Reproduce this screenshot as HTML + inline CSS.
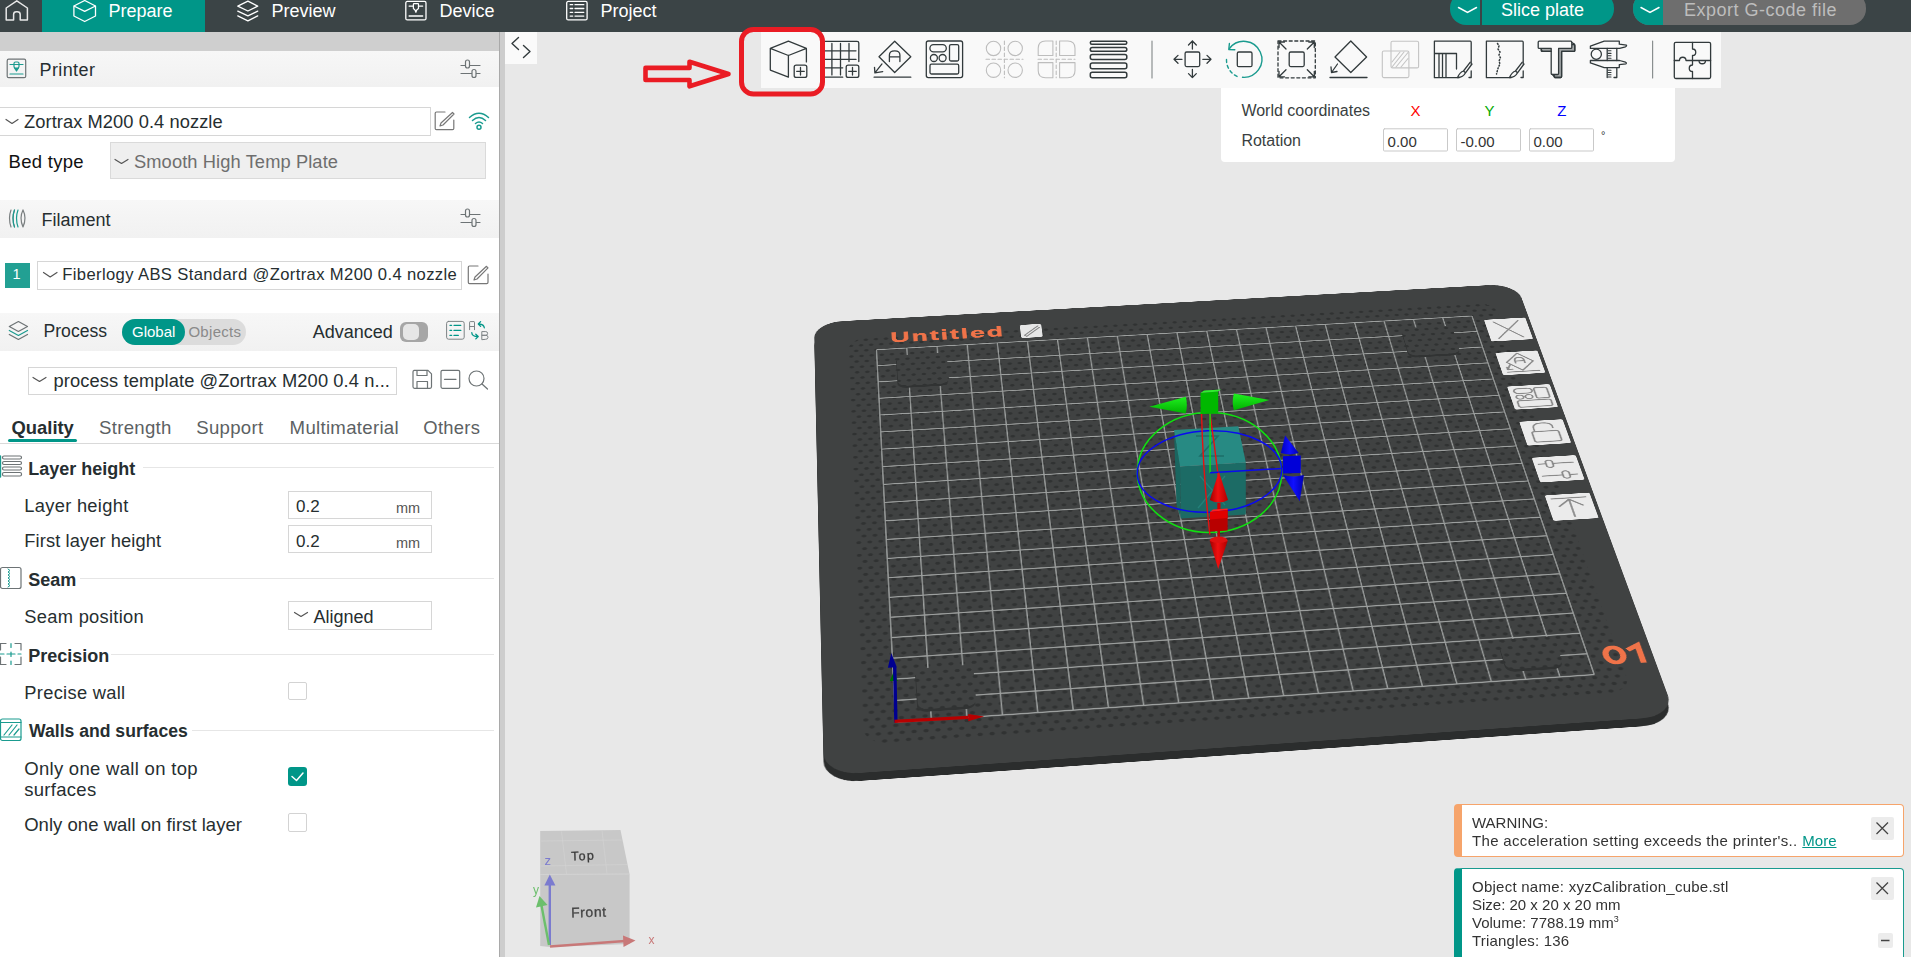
<!DOCTYPE html>
<html><head><meta charset="utf-8">
<style>
*{margin:0;padding:0;box-sizing:border-box}
html,body{width:1911px;height:957px;overflow:hidden;background:#e8e8e8;font-family:"Liberation Sans",sans-serif;color:#262e30}
.a{position:absolute}
.t{position:absolute;white-space:nowrap;line-height:1}
#top{left:0;top:0;width:1911px;height:32px;background:#3b4446}
#left{left:0;top:32px;width:499px;height:925px;background:#fff}
#sep{left:499px;top:32px;width:6px;height:925px;background:#cdcdcd;border-left:1px solid #a9a9a9}
#view{left:505px;top:32px;width:1406px;height:925px;background:#e8e8e8;overflow:hidden}
.hdr{position:absolute;left:0;width:499px;background:linear-gradient(#f7f7f7,#f1f1f1)}
svg{position:absolute;overflow:visible}
</style></head><body>
<!-- TOP BAR -->
<div id="top" class="a">
  <div class="a" style="left:42px;top:0;width:163px;height:32px;background:#009688"></div>
  <svg width="700" height="32" style="left:0;top:0" fill="none" stroke="#fff" stroke-width="1.5" stroke-linejoin="round" stroke-linecap="round">
 <path d="M6.2 20 V8 L16.8 0.8 L27.4 8 V20 H20.2 V14.5 Q20.2 11.8 17.2 11.8 H16.4 Q13.6 11.8 13.6 14.5 V20 Z" stroke="#e8e8e8"/>
 <path d="M84.7 0.5 L95.5 6 V16 L84.7 21.5 L73.9 16 V6 Z M73.9 6 L84.7 11.3 L95.5 6" stroke-width="1.3"/>
 <path d="M247.9 1.2 L257.7 6.1 L247.9 11 L237.8 6.1 Z M237.8 11.1 L247.9 15.9 L257.7 11.1 M237.8 15.9 L247.9 20.9 L257.7 15.9" stroke-width="1.3"/>
 <rect x="405.8" y="1.4" width="20.2" height="18.5" rx="1.5" stroke-width="1.3"/>
 <path d="M409.1 6.1 H413.4 M418.4 6.1 H422.7 M409.1 16 H422.7" stroke-width="1.3"/>
 <path d="M414 3.6 H418 Q418.5 3.6 418.5 4.3 V8.5 L416.7 10 L415.9 12.3 L415 10 L413.4 8.5 V4.3 Q413.4 3.6 414 3.6 Z" stroke-width="1.2"/>
 <rect x="566.7" y="1.4" width="20.4" height="18.5" rx="1.5" stroke-width="1.3"/>
 <path d="M570.2 4.7 H572.7 M575 4.7 H583.8 M570.2 8.5 H572.7 M575 8.5 H583.8 M570.2 12.3 H572.7 M575 12.3 H583.8 M570.2 16.1 H572.7 M575 16.1 H583.8" stroke-width="1.3"/>
</svg>
  <div class="t" style="left:108.5px;top:2px;font-size:18px;color:#fff">Prepare</div>
  <div class="t" style="left:271.5px;top:2px;font-size:18px;color:#fff">Preview</div>
  <div class="t" style="left:439.5px;top:2px;font-size:18px;color:#fff">Device</div>
  <div class="t" style="left:600.5px;top:2px;font-size:18px;color:#fff">Project</div>
  <div class="a" style="left:1450px;top:-8px;width:164px;height:33px;border-radius:0 0 16px 16px;background:#009688;border-radius:16px"></div>
  <div class="a" style="left:1480px;top:0;width:2px;height:25px;background:#3b4446"></div>
  <div class="t" style="left:1501px;top:1px;font-size:18px;color:#fff">Slice plate</div>
  <div class="a" style="left:1633px;top:-8px;width:233px;height:33px;border-radius:16px;background:#6e6e6e;overflow:hidden"><div class="a" style="left:0;top:0;width:30px;height:33px;background:#009688"></div></div>
  <div class="t" style="left:1684px;top:1px;font-size:18px;color:#bdbdbd;letter-spacing:0.5px">Export G-code file</div>
  <svg width="1911" height="32" style="left:0;top:0" fill="none" stroke="#fff" stroke-width="1.5" stroke-linecap="round"><path d="M1458.5 7.5 L1467.5 12.3 L1476.5 7.5 M1641 7.5 L1650 12.3 L1659 7.5"/></svg>
</div>
<div id="left" class="a"></div>
<!-- LEFT PANEL CONTENT -->
<div class="a" style="left:0;top:32px;width:499px;height:19px;background:#cfcfcf"></div>
<div class="hdr" style="top:51px;height:35.5px"></div>
<div class="hdr" style="top:200px;height:38px"></div>
<div class="hdr" style="top:313px;height:38px"></div>
<!-- combos -->
<div class="a" style="left:-2px;top:107px;width:433px;height:28.5px;border:1px solid #d6d6d6;background:#fff"></div>
<div class="a" style="left:109.5px;top:142.3px;width:376.5px;height:37.2px;border:1px solid #dadada;background:#efefef"></div>
<div class="a" style="left:37px;top:261px;width:424.5px;height:28.5px;border:1px solid #d6d6d6;background:#fff"></div>
<div class="a" style="left:5px;top:263px;width:25px;height:25px;background:#22a093"></div>
<div class="a" style="left:28px;top:366.5px;width:368.5px;height:28px;border:1px solid #d6d6d6;background:#fff"></div>
<!-- global/objects toggle -->
<div class="a" style="left:121.7px;top:319px;width:124.5px;height:25.6px;border-radius:13px;background:#dcdcdc"></div>
<div class="a" style="left:121.7px;top:319px;width:63.5px;height:25.6px;border-radius:13px;background:#009688"></div>
<div class="a" style="left:400.3px;top:322px;width:27.5px;height:20px;border-radius:6px;background:#a6a6a6"></div>
<div class="a" style="left:402.5px;top:324px;width:16px;height:16px;border-radius:5px;background:#e6e6e6"></div>
<!-- tabs underline & separator -->
<div class="a" style="left:8px;top:439.3px;width:69px;height:3px;border-radius:2px;background:#009688"></div>
<div class="a" style="left:0;top:443px;width:499px;height:1px;background:#d9d9d9"></div>
<!-- section lines -->
<div class="a" style="left:143px;top:467px;width:351px;height:1px;background:#e6e6e6"></div>
<div class="a" style="left:80px;top:578px;width:414px;height:1px;background:#e6e6e6"></div>
<div class="a" style="left:111px;top:654px;width:383px;height:1px;background:#e6e6e6"></div>
<div class="a" style="left:192px;top:730px;width:302px;height:1px;background:#e6e6e6"></div>
<!-- inputs -->
<div class="a" style="left:288.3px;top:490.6px;width:143.4px;height:28px;border:1px solid #d6d6d6;background:#fff"></div>
<div class="a" style="left:288.3px;top:525.4px;width:143.4px;height:28px;border:1px solid #d6d6d6;background:#fff"></div>
<div class="a" style="left:288.3px;top:601.2px;width:143.4px;height:28.4px;border:1px solid #d6d6d6;background:#fff"></div>
<div class="a" style="left:288.3px;top:681.5px;width:18.5px;height:18.5px;border:1px solid #d3d3d3;border-radius:2px;background:#fff"></div>
<div class="a" style="left:288px;top:767.2px;width:19px;height:19.3px;border-radius:3px;background:#009688"></div>
<div class="a" style="left:288.3px;top:813.3px;width:18.6px;height:18.8px;border:1px solid #d3d3d3;border-radius:2px;background:#fff"></div>
<!-- texts -->
<div class="t" style="left:39.5px;top:60.5px;font-size:18px;letter-spacing:0.4px">Printer</div>
<div class="t" style="left:24px;top:113.0px;font-size:18.3px;letter-spacing:0.07px">Zortrax M200 0.4 nozzle</div>
<div class="t" style="left:8.5px;top:152.5px;font-size:18.5px;letter-spacing:0.3px;color:#111">Bed type</div>
<div class="t" style="left:134px;top:152.5px;font-size:18.3px;color:#6e6e6e;letter-spacing:0.1px">Smooth High Temp Plate</div>
<div class="t" style="left:41.5px;top:210.5px;font-size:18px">Filament</div>
<div class="t" style="left:62.3px;top:267.0px;font-size:16.6px;letter-spacing:0.37px">Fiberlogy ABS Standard @Zortrax M200 0.4 nozzle</div>
<div class="t" style="left:12.5px;top:266.5px;font-size:14.5px;color:#fff">1</div>
<div class="t" style="left:43.5px;top:323.0px;font-size:17.6px">Process</div>
<div class="t" style="left:132px;top:324.0px;font-size:15px;color:#fff">Global</div>
<div class="t" style="left:188.4px;top:324.0px;font-size:15px;color:#8a8a8a;letter-spacing:0.3px">Objects</div>
<div class="t" style="left:312.7px;top:323.0px;font-size:18px">Advanced</div>
<div class="t" style="left:53.6px;top:372.0px;font-size:18.3px;letter-spacing:0.1px">process template @Zortrax M200 0.4 n...</div>
<div class="t" style="left:11.5px;top:419.0px;font-size:18.4px;font-weight:bold">Quality</div>
<div class="t" style="left:99px;top:419.0px;font-size:18.6px;color:#5c6163;letter-spacing:0.3px">Strength</div>
<div class="t" style="left:196.2px;top:419.0px;font-size:18.6px;color:#5c6163;letter-spacing:0.3px">Support</div>
<div class="t" style="left:289.6px;top:419.0px;font-size:18.6px;color:#5c6163;letter-spacing:0.3px">Multimaterial</div>
<div class="t" style="left:423.3px;top:419.0px;font-size:18.4px;color:#5c6163;letter-spacing:0.3px">Others</div>
<div class="t" style="left:28.3px;top:460.0px;font-size:18px;font-weight:bold">Layer height</div>
<div class="t" style="left:24.3px;top:496.5px;font-size:18.3px;letter-spacing:0.3px">Layer height</div>
<div class="t" style="left:296px;top:497.5px;font-size:17px">0.2</div>
<div class="t" style="left:396px;top:500.5px;font-size:14.5px;color:#555">mm</div>
<div class="t" style="left:24.3px;top:531.5px;font-size:18.3px;letter-spacing:0.1px">First layer height</div>
<div class="t" style="left:296px;top:532.5px;font-size:17px">0.2</div>
<div class="t" style="left:396px;top:535.5px;font-size:14.5px;color:#555">mm</div>
<div class="t" style="left:28.3px;top:571.0px;font-size:18px;font-weight:bold">Seam</div>
<div class="t" style="left:24.3px;top:607.5px;font-size:18.3px;letter-spacing:0.3px">Seam position</div>
<div class="t" style="left:313.4px;top:607.5px;font-size:18px">Aligned</div>
<div class="t" style="left:28.3px;top:647.0px;font-size:18px;font-weight:bold">Precision</div>
<div class="t" style="left:24.3px;top:683.5px;font-size:18.3px;letter-spacing:0.3px">Precise wall</div>
<div class="t" style="left:29px;top:723.0px;font-size:17.6px;font-weight:bold">Walls and surfaces</div>
<div class="t" style="left:24.2px;top:759.5px;font-size:18.5px;letter-spacing:0.3px">Only one wall on top</div>
<div class="t" style="left:24.2px;top:780.5px;font-size:18.5px;letter-spacing:0.3px">surfaces</div>
<div class="t" style="left:24.2px;top:815.5px;font-size:18.5px;letter-spacing:0.03px">Only one wall on first layer</div>
<!-- left icons svg -->
<svg width="500" height="900" style="left:0;top:0" fill="none" stroke="#5f6669" stroke-width="1.2" stroke-linecap="round" stroke-linejoin="round">
 <!-- printer icon -->
 <rect x="7.2" y="59.2" width="18.5" height="18.5" rx="1.5" stroke="#6d7375"/>
 <path d="M10 64.5 H23 M10 74 H23" stroke="#1a9b8f"/>
 <rect x="14" y="62" width="5" height="6" rx="1.5" stroke="#1a9b8f"/>
 <path d="M14.5 68 L16.5 71 L18.5 68" stroke="#1a9b8f" fill="#1a9b8f"/>
 <!-- sliders -->
 <path d="M461 65.5 H480 M461 73.5 H480" stroke="#6d7375"/>
 <rect x="465.5" y="60" width="4" height="8" rx="2" fill="#f5f5f5" stroke="#6d7375"/>
 <rect x="472" y="69.5" width="4" height="8" rx="2" fill="#f3f3f3" stroke="#6d7375"/>
 <path d="M461 214.5 H480 M461 222.5 H480" stroke="#6d7375"/>
 <rect x="465.5" y="209" width="4" height="8" rx="2" fill="#f5f5f5" stroke="#6d7375"/>
 <rect x="472" y="218.5" width="4" height="8" rx="2" fill="#f3f3f3" stroke="#6d7375"/>
 <!-- chevrons -->
 <path d="M6 119.5 L12 123.5 L18 119.5 M115 159.5 L121.5 163.5 L128 159.5 M43.5 272.5 L50.2 277 L57 272.5 M33 377.5 L39.5 381.5 L46 377.5 M294.5 612.5 L301 616.5 L307.5 612.5" stroke="#555"/>
 <!-- edit icons -->
 <path d="M445 112 H436.5 Q435.2 112 435.2 113.3 V128.5 Q435.2 129.7 436.5 129.7 H452.5 Q453.8 129.7 453.8 128.5 V120" stroke="#777"/>
 <path d="M452.5 112.5 L454 114 L443 125 L440 126 L441 123 Z" stroke="#777"/>
 <path d="M478 266 H469.5 Q468.3 266 468.3 267.3 V282.3 Q468.3 283.6 469.5 283.6 H486.7 Q488 283.6 488 282.3 V274" stroke="#777"/>
 <path d="M486.5 266.3 L488 267.8 L477 279 L474 280 L475 277 Z" stroke="#777"/>
 <!-- wifi -->
 <g stroke="#1a9b8f" stroke-width="1.5">
  <path d="M469.5 117.5 Q479 109 488.5 117.5 M472.5 120.5 Q479 114.5 485.5 120.5 M475.5 123.5 Q479 120.5 482.5 123.5"/>
  <circle cx="479" cy="127.3" r="2"/>
 </g>
 <!-- filament icon -->
 <path d="M11 210 Q8 218 11 227 M14.5 210 Q11.5 218 14.5 227 M23 210 Q27 218 23 227 M23 210 Q19 218 23 227" stroke="#7a7f80"/>
 <path d="M14.5 210 Q11.5 218 14.5 227 M18 210 Q15 218 18 227" stroke="#1a9b8f"/>
 <!-- layers icon -->
 <path d="M18.4 321.5 L27.5 326.5 L18.4 331.5 L9.3 326.5 Z M9.3 334.5 L18.4 339.5 L27.5 334.5" stroke="#6d7375"/>
 <path d="M9.3 330.5 L18.4 335.5 L27.5 330.5" stroke="#1a9b8f"/>
 <!-- list & AB icons -->
 <rect x="446.6" y="321.4" width="17.6" height="17.8" rx="2" stroke="#7d8385" stroke-width="1"/>
 <path d="M450 325.3 H451.6 M454 325.3 H460.8 M450 330.4 H451.6 M454 330.4 H460.8 M450 335.4 H451.6 M454 335.4 H458.3" stroke="#009688" stroke-width="1.3"/>
 <path d="M469.6 329.7 V322.2 Q469.6 321.6 470.2 321.6 H474 Q474.5 321.6 474.5 322.2 V329.7 M469.6 326.5 H474.5" stroke="#7d8385" stroke-width="1"/>
 <path d="M479 324 Q484 324.5 484.3 327.8 M480.6 321.6 L478.3 324 L480.6 326.4" stroke="#009688" stroke-width="1.3"/>
 <path d="M471.8 332.7 Q472 336.5 478 336.5 M475.8 334.3 L478.2 336.5 L475.8 338.9" stroke="#009688" stroke-width="1.3"/>
 <path d="M481.8 339.3 V331.6 H485.8 Q487.6 331.6 487.6 333.4 Q487.6 335.3 485.8 335.3 H481.8 H486 Q488 335.3 488 337.3 Q488 339.3 486 339.3 Z" stroke="#7d8385" stroke-width="1"/>
 <!-- save / minus / search -->
 <path d="M414 370.3 H428 L431.5 373.8 V386.8 Q431.5 388.3 430 388.3 H414.5 Q413 388.3 413 386.8 V371.8 Q413 370.3 414.5 370.3 Z M417 370.5 V375.5 H427 V370.5 M417 388 V381.5 H427.5 V388" stroke="#6d7375"/>
 <rect x="441" y="370.3" width="18.7" height="18" rx="1.5" stroke="#6d7375"/>
 <path d="M444.5 379.3 H456" stroke="#6d7375"/>
 <circle cx="476.5" cy="378.5" r="7.5" stroke="#6d7375"/>
 <path d="M482 384 L487.5 389" stroke="#6d7375"/>
 <!-- section icons -->
 <g stroke="#6d7375">
 <rect x="2.5" y="456" width="19" height="3" rx="1.5"/><rect x="2.5" y="461.5" width="19" height="3" rx="1.5"/><rect x="2.5" y="467" width="19" height="3" rx="1.5"/><rect x="2.5" y="472.5" width="19" height="3.5" rx="1.5"/>
 </g>
 <path d="M0.5 456 V477" stroke="#1a9b8f" stroke-width="1.4"/>
 <rect x="0.5" y="567.5" width="20.5" height="21" rx="2" stroke="#6d7375"/>
 <path d="M8 569 L10 570.5 L8 572 L10 573.5 L8 575 L10 576.5 L8 578 L10 579.5 L8 581 L10 582.5 L8 584 L10 585.5 L8 587" stroke="#1a9b8f" stroke-width="1"/>
 <path d="M0.5 643.5 V650 M0.5 657 V664.5 H6 M15 664.5 H21 V657 M21 650 V643.5 H15 M6 643.5 H0.5" stroke="#6d7375"/>
 <path d="M11 643.5 V647.5 M11 652 V656.5 M11 661 V664.5 M0.5 654 H4 M7 654 H15 M18 654 H21" stroke="#1a9b8f"/>
 <rect x="0.5" y="719" width="20.5" height="21.5" rx="2" stroke="#1a9b8f"/>
 <path d="M0.5 722.5 H21 M0.5 737 H21 M4 735 L12 725 M9 735 L17 725 M14 735 L19 729" stroke="#1a9b8f"/>
 <!-- check -->
 <path d="M292 776.5 L296.5 780.5 L303 773" stroke="#fff" stroke-width="1.5"/>
</svg>
<div id="sep" class="a"></div>
<div id="view" class="a"></div>
<!-- BED -->
<div class="a" style="left:-6px;top:-6px;width:1012px;height:1012px;transform-origin:6px 6px;transform:translate(0px,8px) matrix3d(0.73611945,-0.032774605,0,2.2303932e-05,-0.13781755,0.31360081,0,-0.00017939024,0,0,1,0,814,322.7,0,1)"><div class="a" style="left:6px;top:6px;width:1000px;height:1000px;background:#2b2d2d;border-radius:40px"></div></div>
<div class="a" style="left:-6px;top:-6px;width:1012px;height:1012px;transform-origin:6px 6px;transform:matrix3d(0.73611945,-0.032774605,0,2.2303932e-05,-0.13781755,0.31360081,0,-0.00017939024,0,0,1,0,814,322.7,0,1)">
<div class="a" id="bed" style="left:6px;top:6px;width:1000px;height:1000px;background:#404242;border-radius:40px;overflow:hidden">
 <div class="a" style="left:47px;top:46px;width:912px;height:903px;border-radius:30px;background-image:radial-gradient(circle at 3.5px 3.5px,#303232 2.7px,transparent 3.4px),radial-gradient(circle at 10.47px 17.43px,#303232 2.7px,transparent 3.4px);background-size:13.933px 27.867px;background-position:6.63px 3.63px"></div>
 <svg width="1000" height="1000" style="left:0;top:0">
  <g stroke="#9c9f9e" stroke-width="1.7">
<line x1="85.0" y1="81" x2="85.0" y2="911"/>
<line x1="126.8" y1="81" x2="126.8" y2="911"/>
<line x1="168.6" y1="81" x2="168.6" y2="911"/>
<line x1="210.4" y1="81" x2="210.4" y2="911"/>
<line x1="252.2" y1="81" x2="252.2" y2="911"/>
<line x1="294.0" y1="81" x2="294.0" y2="911"/>
<line x1="335.8" y1="81" x2="335.8" y2="911"/>
<line x1="377.6" y1="81" x2="377.6" y2="911"/>
<line x1="419.4" y1="81" x2="419.4" y2="911"/>
<line x1="461.2" y1="81" x2="461.2" y2="911"/>
<line x1="503.0" y1="81" x2="503.0" y2="911"/>
<line x1="544.8" y1="81" x2="544.8" y2="911"/>
<line x1="586.6" y1="81" x2="586.6" y2="911"/>
<line x1="628.4" y1="81" x2="628.4" y2="911"/>
<line x1="670.2" y1="81" x2="670.2" y2="911"/>
<line x1="712.0" y1="81" x2="712.0" y2="911"/>
<line x1="753.8" y1="81" x2="753.8" y2="911"/>
<line x1="795.6" y1="81" x2="795.6" y2="911"/>
<line x1="837.4" y1="81" x2="837.4" y2="911"/>
<line x1="879.2" y1="81" x2="879.2" y2="911"/>
<line x1="921.0" y1="81" x2="921.0" y2="911"/>
  </g>
  <g stroke="#9c9f9e" stroke-width="2.6">
<line x1="85" y1="81.0" x2="921" y2="81.0"/>
<line x1="85" y1="122.5" x2="921" y2="122.5"/>
<line x1="85" y1="164.0" x2="921" y2="164.0"/>
<line x1="85" y1="205.5" x2="921" y2="205.5"/>
<line x1="85" y1="247.0" x2="921" y2="247.0"/>
<line x1="85" y1="288.5" x2="921" y2="288.5"/>
<line x1="85" y1="330.0" x2="921" y2="330.0"/>
<line x1="85" y1="371.5" x2="921" y2="371.5"/>
<line x1="85" y1="413.0" x2="921" y2="413.0"/>
<line x1="85" y1="454.5" x2="921" y2="454.5"/>
<line x1="85" y1="496.0" x2="921" y2="496.0"/>
<line x1="85" y1="537.5" x2="921" y2="537.5"/>
<line x1="85" y1="579.0" x2="921" y2="579.0"/>
<line x1="85" y1="620.5" x2="921" y2="620.5"/>
<line x1="85" y1="662.0" x2="921" y2="662.0"/>
<line x1="85" y1="703.5" x2="921" y2="703.5"/>
<line x1="85" y1="745.0" x2="921" y2="745.0"/>
<line x1="85" y1="786.5" x2="921" y2="786.5"/>
<line x1="85" y1="828.0" x2="921" y2="828.0"/>
<line x1="85" y1="869.5" x2="921" y2="869.5"/>
<line x1="85" y1="911.0" x2="921" y2="911.0"/>
  </g>
 </svg>
 <div class="a" style="left:112px;top:99px;width:69px;height:79px;border-radius:12px;background-color:#404242;background-image:radial-gradient(circle at 3.5px 3.5px,#303232 2.7px,transparent 3.4px),radial-gradient(circle at 10.47px 17.43px,#303232 2.7px,transparent 3.4px);background-size:13.933px 27.867px;background-position:11.30px 6.37px;box-shadow:-1px 5px 0 #313333"></div>
 <div class="a" style="left:816px;top:103px;width:72px;height:73px;border-radius:12px;background-color:#404242;background-image:radial-gradient(circle at 3.5px 3.5px,#303232 2.7px,transparent 3.4px),radial-gradient(circle at 10.47px 17.43px,#303232 2.7px,transparent 3.4px);background-size:13.933px 27.867px;background-position:3.97px 2.37px;box-shadow:-1px 5px 0 #313333"></div>
 <div class="a" style="left:112px;top:810px;width:69px;height:80px;border-radius:12px;background-color:#404242;background-image:radial-gradient(circle at 3.5px 3.5px,#303232 2.7px,transparent 3.4px),radial-gradient(circle at 10.47px 17.43px,#303232 2.7px,transparent 3.4px);background-size:13.933px 27.867px;background-position:11.30px 19.90px;box-shadow:-1px 5px 0 #313333"></div>
 <div class="a" style="left:818px;top:830px;width:70px;height:60px;border-radius:12px;background-color:#404242;background-image:radial-gradient(circle at 3.5px 3.5px,#303232 2.7px,transparent 3.4px),radial-gradient(circle at 10.47px 17.43px,#303232 2.7px,transparent 3.4px);background-size:13.933px 27.867px;background-position:1.97px 27.77px;box-shadow:-1px 5px 0 #313333"></div>
 <div class="a" style="left:936px;top:93px;width:59px;height:58px;background:#ebebeb;border-radius:3px"></div>
 <div class="a" style="left:936px;top:180.5px;width:59px;height:58px;background:#ebebeb;border-radius:3px"></div>
 <div class="a" style="left:936px;top:268px;width:59px;height:58px;background:#ebebeb;border-radius:3px"></div>
 <div class="a" style="left:936px;top:355.5px;width:59px;height:58px;background:#ebebeb;border-radius:3px"></div>
 <div class="a" style="left:936px;top:443px;width:59px;height:58px;background:#ebebeb;border-radius:3px"></div>
 <div class="a" style="left:936px;top:530.5px;width:59px;height:58px;background:#ebebeb;border-radius:3px"></div>
 <svg width="1000" height="1000" style="left:0;top:0" fill="none" stroke="#8a8a8a" stroke-width="3" stroke-linecap="round" stroke-linejoin="round">
  <path d="M948 100 L983 144 M983 100 L948 144" stroke-width="2.3"/>
  <path d="M965.5 185 L984 207 L965.5 229 L947 207 Z M944 232 H988 M951 212 L945 226 M945 219 L945 226 L952 225" stroke-width="2.5"/>
  <path d="M959 210 V204 Q959 196 965.5 196 Q972 196 972 204 V210 M959 205 H972" stroke-width="2.5"/>
  <rect x="943" y="275" width="25" height="12" rx="6" stroke-width="2.5"/><rect x="971" y="275" width="18" height="26" rx="3" stroke-width="2.5"/>
  <circle cx="948.5" cy="296" r="5" stroke-width="2.5"/><circle cx="961" cy="296" r="5" stroke-width="2.5"/>
  <rect x="943" y="305" width="46" height="16" rx="3" stroke-width="2.5"/>
  <path d="M952 382 V374 Q952 362 965 362 Q978 362 978 372 V375" stroke-width="2.3"/>
  <rect x="948" y="382" width="36" height="25" rx="3" stroke-width="2.5"/>
  <path d="M942 459 H988 M942 487 H988" stroke-width="2.5"/>
  <rect x="952" y="451" width="9" height="17" rx="4.5" fill="#ebebeb" stroke-width="2.5"/>
  <rect x="969" y="478" width="9" height="17" rx="4.5" fill="#ebebeb" stroke-width="2.5"/>
  <path d="M943 540 H988 M965.5 545 V582 M950 558 L965.5 543 L981 558" stroke-width="2.5"/>
  <rect x="286" y="37" width="30" height="35" rx="4" fill="#e6e6e6" stroke="none"/>
  <path d="M291 65 L311 42 M294 68 L313 46 M291 65 L294 68" stroke="#8a8a8a" stroke-width="2"/>
 </svg>
 <div class="t" style="left:105px;top:32.7px;font-size:37px;font-weight:bold;color:#f07349;letter-spacing:2.7px;-webkit-text-stroke:0.8px #f07349">Untitled</div>
 <svg width="1000" height="1000" style="left:0;top:0" fill="none" stroke="#f07349" stroke-width="7.5"><ellipse cx="953.5" cy="875.5" rx="10.5" ry="15"/><path d="M971.5 867.5 L985.5 859 V894.5" stroke-linecap="butt"/></svg>
</div></div>

<!-- GIZMO -->
<svg width="1911" height="957" style="left:0;top:0" fill="none">
 <defs>
  <linearGradient id="gr" x1="0" x2="1"><stop offset="0" stop-color="#a00000"/><stop offset="0.45" stop-color="#f01010"/><stop offset="1" stop-color="#b00000"/></linearGradient>
  <linearGradient id="gg" x1="0" y1="0" x2="0" y2="1"><stop offset="0" stop-color="#20f020"/><stop offset="1" stop-color="#00b000"/></linearGradient>
  <linearGradient id="gb" x1="0" x2="1"><stop offset="0" stop-color="#0000c0"/><stop offset="0.5" stop-color="#1010ff"/><stop offset="1" stop-color="#0000b0"/></linearGradient>
 </defs>
 <!-- origin axes -->
 <path d="M889.8 681 L893.8 671.5 L897.8 681 Z" fill="#007000"/>
 <path d="M894.7 667 L895.9 722.5" stroke="#000090" stroke-width="3.4"/>
 <path d="M887.9 667.8 L891.3 652.9 L896.8 667.3 Z" fill="#000090"/>
 <path d="M894.5 721.3 L968.5 717.4" stroke="#b80000" stroke-width="3.2"/>
 <path d="M968.2 713.9 L984.1 716.4 L968.3 721.3 Z" fill="#b80000"/>
 <!-- cube -->
 <path d="M1174 430 L1180 466.4 L1180.7 518.4 L1176.5 505 Z" fill="#1a6660"/>
 <path d="M1174 430 L1238.3 426.3 L1245.8 462.6 L1180 466.4 Z" fill="#278a83"/>
 <path d="M1180 466.4 L1245.8 462.6 L1245.8 514.6 L1180.7 518.4 Z" fill="#1c6b65"/>
 <path d="M1196 436 H1218 L1200 456 H1224" stroke="#1d6f69" stroke-width="1.6"/>
 <path d="M1200 476 L1225 505 M1225 476 L1198 508" stroke="#238079" stroke-width="1.3"/>
 <!-- rings -->
 <ellipse cx="1209.5" cy="472.5" rx="72.2" ry="60" stroke="#10e010" stroke-width="1.5"/>
 <ellipse cx="1209.5" cy="471.5" rx="72.3" ry="40.7" stroke="#0a0af0" stroke-width="1.5" transform="rotate(-2.2 1209.5 471.5)"/>
 <path d="M1201.5 413.4 Q1203.5 480 1209.9 534.6 M1209.9 413.4 Q1214.5 445 1218.2 476" stroke="#e81010" stroke-width="1.4"/>
 <!-- axis lines -->
 <path d="M1210.1 413 V472.7" stroke="#10e010" stroke-width="1.4"/>
 <path d="M1210.1 472.7 L1282 468.5" stroke="#0a0af0" stroke-width="1.5"/>
 <!-- green handles -->
 <path d="M1149.3 406.8 L1185.8 396.7 Q1188 405 1185.8 413.4 Z" fill="url(#gg)"/>
 <path d="M1269.4 399.9 L1233.9 393.6 Q1231.5 402 1233.9 410.3 Z" fill="url(#gg)"/>
 <path d="M1200.5 393 L1218.2 391.5 V413.4 L1200.5 414 Z" fill="#00b800"/>
 <path d="M1200.5 393 L1204 390.5 L1221 389.5 L1218.2 391.5 Z" fill="#30f030"/>
 <!-- red handles -->
 <path d="M1218.9 471.4 L1228 500 Q1218.9 505 1209.8 500 Z" fill="url(#gr)"/>
 <path d="M1217.3 503 H1220.5 V510 H1217.3 Z" fill="#d00000"/>
 <path d="M1209.9 512 L1227.6 510 V530.5 L1209.9 531.5 Z" fill="#b80000"/>
 <path d="M1209.9 512 L1213 509.5 L1227.6 508.5 V510 Z" fill="#ff2020"/>
 <path d="M1209.9 512 L1227.6 510 V518 L1209.9 519.5 Z" fill="#e00000"/>
 <path d="M1217.5 531 H1220 V537 H1217.5Z" fill="#c00000"/>
 <ellipse cx="1218.7" cy="540.8" rx="8.9" ry="4.2" fill="#e01010"/>
 <path d="M1209.8 541 Q1218.7 545 1227.6 541 L1218.2 569.1 Z" fill="url(#gr)"/>
 <!-- blue handles -->
 <path d="M1285.1 435.4 L1298.7 453.1 Q1290 456 1280.9 453.1 Z" fill="url(#gb)"/>
 <path d="M1283 456.3 L1300.8 455.5 V473 L1283 473.5 Z" fill="#0000d8"/>
 <path d="M1283 475.1 Q1293 478 1303.9 475.1 L1299.7 501.2 Z" fill="url(#gb)"/>
</svg>

<!-- TOOLBAR -->
<div class="a" style="left:505px;top:32px;width:32px;height:32px;background:#fafafa"></div>
<div class="a" style="left:761px;top:32px;width:960px;height:56px;background:#f9f9f9"></div>
<div class="a" style="left:1221px;top:88px;width:454px;height:74px;background:#fff;border-radius:0 0 4px 4px"></div>
<svg width="1911" height="170" style="left:0;top:0" fill="none" stroke="#323a3c" stroke-width="1.3" stroke-linejoin="round" stroke-linecap="round">
 <!-- collapse -->
 <path d="M518.5 37.5 L512 43.5 L518.5 49.5 M523.5 45.5 L530 51.5 L523.5 57.5" stroke-width="1.4"/>
 <!-- cube plus -->
 <path d="M788.4 41.1 L770.3 48.4 L788.4 55.5 L806.4 48.4 Z M770.3 48.4 V70.1 L788.4 77.2 V55.5 M806.4 48.4 V61.9"/>
 <rect x="794.2" y="65.2" width="12.6" height="12.2" rx="2"/>
 <path d="M800.5 67.5 V75.1 M796.7 71.3 H804.3"/>
 <!-- grid plus -->
 <path d="M825 41.3 H857 Q858.8 41.3 858.8 43 V61.5 M831.9 43.5 V74.9 M840.5 43.5 V74.9 M849 43.5 V61.5 M825 50.8 H856 M825 59.4 H856 M825 67.8 H842.7 M825 77.2 H842.7"/>
 <rect x="846.2" y="65.2" width="12.6" height="12.2" rx="2"/>
 <path d="M852.5 67.5 V75.1 M848.7 71.3 H856.3"/>
 <!-- diamond A -->
 <path d="M894.7 41.3 L910.8 56.8 L894.7 72.5 L879 56.8 Z M874.1 77.2 H910.8 M882 63.9 L874.9 72.9 M874.5 67.4 L874.9 72.9 L882.7 71.7"/>
 <path d="M889.4 61.5 V55 Q889.4 50.9 894.7 50.9 Q899.9 50.9 899.9 55 V61.5 M889.4 56.8 H899.9"/>
 <!-- layout -->
 <rect x="926.3" y="41" width="36.3" height="36.6" rx="2"/>
 <rect x="929.9" y="44.6" width="16.4" height="7.2" rx="3.6"/>
 <rect x="949.5" y="44.6" width="9.2" height="16.4" rx="1.5"/>
 <circle cx="933.9" cy="58" r="3.5"/><circle cx="942.6" cy="58" r="3.5"/>
 <rect x="930" y="64.2" width="28.7" height="9.8" rx="1.5"/>
 <!-- circles (disabled) -->
 <g stroke="#bdbdbd" stroke-width="1.1">
  <circle cx="993.5" cy="48.4" r="7.2"/><circle cx="1015.2" cy="48.4" r="7.2"/><circle cx="993.5" cy="70.2" r="7.2"/><circle cx="1015.2" cy="70.2" r="7.2"/>
  <path d="M1004.4 41 V77.7 M986 59.3 H1023" stroke-dasharray="3.5 2.5"/>
  <path d="M1052.9 55.5 V41 H1045.5 Q1038.2 41 1038.2 48.3 V55.5 Z M1059.6 55.5 V41 H1067.7 Q1075 41 1075 48.3 V55.5 Z M1052.9 62.6 V77.7 H1045.5 Q1038.2 77.7 1038.2 70.4 V62.6 Z M1059.6 62.6 V77.7 H1067.7 Q1075 77.7 1075 70.4 V62.6 Z"/>
  <path d="M1056.2 41 V77.7 M1038 59.3 H1075" stroke-dasharray="3.5 2.5"/>
 </g>
 <!-- layers -->
 <g stroke-width="1.5">
 <rect x="1090.3" y="41.2" width="36.5" height="3" rx="1.5"/>
 <rect x="1090.3" y="47.5" width="36.5" height="3.8" rx="1.9"/>
 <rect x="1090.3" y="54.5" width="36.5" height="5" rx="2"/>
 <rect x="1090.3" y="63" width="36.5" height="5.8" rx="2"/>
 <rect x="1090.3" y="72.2" width="36.5" height="5.5" rx="2"/>
 </g>
 <path d="M1152 41 V78" stroke="#8a8f90" stroke-width="1.2"/>
 <!-- move -->
 <rect x="1185.1" y="52" width="14.6" height="14.6" rx="1.5"/>
 <path d="M1192.4 41 V49 M1188.5 45 L1192.4 41 L1196.3 45 M1192.4 69.5 V77.6 M1188.5 73.6 L1192.4 77.6 L1196.3 73.6 M1174 59.3 H1182 M1178 55.4 L1174 59.3 L1178 63.2 M1202.8 59.3 H1211 M1207 55.4 L1211 59.3 L1207 63.2"/>
 <!-- rotate -->
 <rect x="1237.3" y="52" width="14.7" height="14.7" rx="1.5"/>
 <path d="M1229.5 48.5 A18 18 0 1 1 1242.5 77.3" stroke="#1a9b8f" stroke-width="1.4"/>
 <path d="M1226.5 59.5 A18 18 0 0 0 1238.5 77" stroke="#1a9b8f" stroke-width="1.4" stroke-dasharray="3 3"/>
 <path d="M1229.4 43.5 L1228.8 49.5 L1234.8 49.8" stroke="#1a9b8f" stroke-width="1.4"/>
 <!-- scale -->
 <rect x="1278" y="41" width="37.3" height="36.8" stroke-dasharray="3 2.6"/>
 <rect x="1289.2" y="52" width="15" height="14.6" rx="1.5"/>
 <path d="M1279 42 L1286 49 M1279 42 V47.5 M1279 42 H1284.5 M1314.3 42 L1307.3 49 M1314.3 42 V47.5 M1314.3 42 H1308.8 M1279 76.8 L1286 69.8 M1279 76.8 V71.3 M1279 76.8 H1284.5 M1314.3 76.8 L1307.3 69.8 M1314.3 76.8 V71.3 M1314.3 76.8 H1308.8"/>
 <!-- place on face -->
 <path d="M1350.8 41 L1366.6 57 L1350.8 72.5 L1335 57 Z M1330 77.5 H1367 M1337.5 64 L1331.5 72.5 M1331 67 L1331.5 72.5 L1337 71.5"/>
 <!-- boolean disabled -->
 <g stroke="#c4c4c4" stroke-width="1.1">
  <rect x="1391" y="41.3" width="27.6" height="26.6" rx="1.5"/>
  <rect x="1382.3" y="51" width="26.6" height="26.6" rx="1.5"/>
  <path d="M1392 62 L1400 52 M1392 67 L1404 52 M1396 67 L1408 52.5 M1401 67 L1408 58.5" />
 </g>
 <!-- support paint -->
 <path d="M1459 77.7 H1434.4 V41.2 H1470.3 Q1471.2 41.2 1471.2 42.5 V64 M1434.4 53.5 H1456.5 V69 M1439 53.5 V77.7 M1442.5 53.5 V77.7 M1446 53.5 V77.7 M1471.2 71 V77.5 H1469"/>
 <path d="M1470.3 62.2 L1463.5 71 M1465.5 72.8 L1472 64 M1463.5 71 Q1460 72 1457.5 77.5 Q1463 77.7 1465.5 72.8 Z"/>
 <!-- seam paint -->
 <path d="M1511 77.7 H1486.4 V41.2 H1522.3 Q1523.2 41.2 1523.2 42.5 V64 M1523.2 71 V77.5 H1521"/>
 <path d="M1497.5 43.5 L1499 46 L1498 49 L1500 52 L1499 55 L1500.5 58 L1499 61 L1500 64 L1498.5 67 L1497.5 70 L1496.5 74" stroke-dasharray="1 2" stroke-width="1.5"/>
 <path d="M1522.3 62.2 L1515.5 71 M1517.5 72.8 L1524 64 M1515.5 71 Q1512 72 1509.5 77.5 Q1515 77.7 1517.5 72.8 Z"/>
 <!-- text T -->
 <path d="M1542 44.5 H1573.5 Q1574.8 44.5 1574.8 45.5 V50.4 Q1574.8 51.4 1573.8 51.4 H1561.6 V76.5 Q1561.6 77.5 1560.6 77.5 H1555 Q1554.2 77.5 1554.2 76.5 V51.4 H1542 Q1541.2 51.4 1541.2 50.4 V45.5 Q1541.2 44.5 1542 44.5 Z" fill="#a3a7a8"/>
 <path d="M1539.2 41.2 H1570.8 Q1571.8 41.2 1571.8 42.2 V47.4 Q1571.8 48.4 1570.8 48.4 H1558.6 V73.5 Q1558.6 74.5 1557.6 74.5 H1552.2 Q1551.2 74.5 1551.2 73.5 V48.4 H1539.2 Q1538.2 48.4 1538.2 47.4 V42.2 Q1538.2 41.2 1539.2 41.2 Z" fill="#f9f9f9"/>
 <path d="M1571.8 42.5 L1574.5 44 Q1574.8 44.5 1574.8 45.5 V50.4 Q1574.8 51.4 1573.8 51.4 H1561.6 V76.5 Q1561.6 77.5 1560.6 77.5 H1555 L1552.5 74.5 M1541.2 48.8 Q1541.5 51.4 1543 51.4 H1551.2"/>
 <!-- measure -->
 <path d="M1590.4 46.2 L1604.2 41.2 H1619.3 V44.2 L1626.4 45.1 Q1627 46 1625.5 46.8 L1619.6 48.4 H1590.4 Z"/>
 <path d="M1590.4 60.5 H1619.6 L1625.5 62.2 Q1627 63 1626 63.8 L1619.3 64.6 V67.6 H1604.2 L1590.4 62.9 Z"/>
 <circle cx="1596.3" cy="54.2" r="5.1"/>
 <path d="M1607.2 48.4 V60.5 M1616.8 48.4 V60.5 M1607.2 67.6 V77.5 M1616.8 67.6 V77.5 H1614"/>
 <path d="M1608 50.8 H1611 M1608 53.4 H1611 M1608 55.8 H1611 M1608 58.2 H1611 M1608 70.3 H1611 M1608 72.5 H1611 M1608 74.7 H1611 M1608 77 H1611" stroke-width="1.1"/>
 <path d="M1652.6 41 V78" stroke="#8a8f90" stroke-width="1.2"/>
 <!-- puzzle -->
 <rect x="1674.3" y="42.3" width="36.3" height="36.2" rx="1.5"/>
 <path d="M1692.5 42.3 V49 A3 3 0 0 1 1692.5 55.5 V60.5 M1674.3 60.5 H1679.5 A3 3 0 0 1 1686 60.5 H1710.6 M1692.5 60.5 V65 A3 3 0 0 0 1692.5 71.5 V78.5 M1699 60.5 A3 3 0 0 0 1705.5 60.5"/>
 <!-- world coords panel -->
 <g stroke="#c9c9c9" stroke-width="1" fill="#fff">
  <rect x="1383.5" y="128.8" width="64" height="22.2" rx="1"/>
  <rect x="1456.5" y="128.8" width="64" height="22.2" rx="1"/>
  <rect x="1529.5" y="128.8" width="64" height="22.2" rx="1"/>
 </g>
 <!-- red annotation -->
 <rect x="741.5" y="29.5" width="81" height="64.5" rx="12" stroke="#ea1c24" stroke-width="5"/>
 <path d="M645.5 67.9 H689.5 V61.8 L728.5 74 L689.5 86.3 V80 H645.5 Z" stroke="#ea1c24" stroke-width="4.6" stroke-linejoin="round"/>
</svg>
<div class="t" style="left:1241.4px;top:102.7px;font-size:16px;color:#3a3f41">World coordinates</div>
<div class="t" style="left:1410.5px;top:103.4px;font-size:15px;color:#f00">X</div>
<div class="t" style="left:1484.5px;top:103.4px;font-size:15px;color:#0a0">Y</div>
<div class="t" style="left:1557.3px;top:103.4px;font-size:15px;color:#00f">Z</div>
<div class="t" style="left:1241.4px;top:132.8px;font-size:16px;color:#3a3f41">Rotation</div>
<div class="t" style="left:1387.6px;top:133.5px;font-size:15px;color:#333">0.00</div>
<div class="t" style="left:1460.5px;top:133.5px;font-size:15px;color:#333">-0.00</div>
<div class="t" style="left:1533.5px;top:133.5px;font-size:15px;color:#333">0.00</div>
<div class="t" style="left:1601px;top:130px;font-size:11px;color:#333">°</div>
<!-- NAV CUBE -->
<svg width="1911" height="957" style="left:0;top:0" fill="none">
 <path d="M540.2 831 L620.5 830 L629.6 874.5 V944 L550 947 L540.2 946 Z" fill="#c8c8c8"/>
 <path d="M540.2 874.5 L629.6 874" stroke="#d6d6d6" stroke-width="0.8"/>
 <path d="M541 841 L621.5 840 M541 866 L627 864.5 M561.5 831.5 L566.5 874 M602 830.5 L607 873.5" stroke="#d4d4d4" stroke-width="0.6"/>
 <path d="M549.8 945 V879" stroke="#7b7bcf" stroke-width="2.4"/>
 <path d="M544.4 885.5 L549.8 874.5 L555.4 885.5 Z" fill="#7b7bcf"/>
 <path d="M549 945 L541 903" stroke="#6cbf6c" stroke-width="2.4"/>
 <path d="M536 907.5 L539.5 896 L547.5 905 Z" fill="#6cbf6c"/>
 <path d="M550 946.5 L625 941" stroke="#c87878" stroke-width="2.6"/>
 <path d="M623 935.5 L635.5 940.5 L623.5 947 Z" fill="#c87878"/>
</svg>
<div class="t" style="left:571px;top:850px;font-size:12.5px;color:#3a3a3a;transform:rotate(-2deg);letter-spacing:1.3px;-webkit-text-stroke:0.3px #3a3a3a">Top</div>
<div class="t" style="left:570.5px;top:904.5px;font-size:14px;color:#444;transform:rotate(-1.5deg);letter-spacing:0.6px;-webkit-text-stroke:0.3px #444">Front</div>
<div class="t" style="left:544.5px;top:853.5px;font-size:13px;color:#7b7bcf">z</div>
<div class="t" style="left:533px;top:884px;font-size:12px;color:#6cbf6c">y</div>
<div class="t" style="left:648.5px;top:933.5px;font-size:12px;color:#c87878">x</div>
<!-- NOTIFICATIONS -->
<div class="a" style="left:1454.3px;top:804.3px;width:449.6px;height:52.7px;border:1.5px solid #f6a46b;border-left:8.5px solid #f6a46b;border-radius:4px;background:#fff"></div>
<div class="a" style="left:1454.3px;top:868.4px;width:449.6px;height:100px;border:1.5px solid #1a9b8f;border-left:8.5px solid #009688;border-radius:4px;background:#fff"></div>
<div class="a" style="left:1871px;top:817px;width:22.5px;height:22.5px;background:#ececec;border-radius:2px"></div>
<div class="a" style="left:1871px;top:877px;width:22.5px;height:22.5px;background:#ececec;border-radius:2px"></div>
<div class="a" style="left:1877.5px;top:933px;width:15.5px;height:15px;background:#ececec;border-radius:2px"></div>
<svg width="1911" height="957" style="left:0;top:0" fill="none" stroke="#444" stroke-width="1.3">
 <path d="M1876.5 822.5 L1888 834 M1888 822.5 L1876.5 834 M1876.5 882.5 L1888 894 M1888 882.5 L1876.5 894 M1881 940.5 H1889.5"/>
</svg>
<div class="t" style="left:1472px;top:815px;font-size:15px;color:#333">WARNING:</div>
<div class="t" style="left:1472px;top:832.5px;font-size:15px;color:#333;letter-spacing:0.33px">The acceleration setting exceeds the printer's..</div>
<div class="t" style="left:1802.3px;top:832.5px;font-size:15px;color:#009688;text-decoration:underline">More</div>
<div class="t" style="left:1472px;top:878.8px;font-size:15px;color:#333;letter-spacing:0.25px">Object name: xyzCalibration_cube.stl</div>
<div class="t" style="left:1472px;top:896.5px;font-size:15px;color:#333">Size: 20 x 20 x 20 mm</div>
<div class="t" style="left:1472px;top:914.5px;font-size:15px;color:#333">Volume: 7788.19 mm<sup style="font-size:9px;vertical-align:6px">3</sup></div>
<div class="t" style="left:1472px;top:932.8px;font-size:15px;color:#333;letter-spacing:0.2px">Triangles: 136</div>

</body></html>
